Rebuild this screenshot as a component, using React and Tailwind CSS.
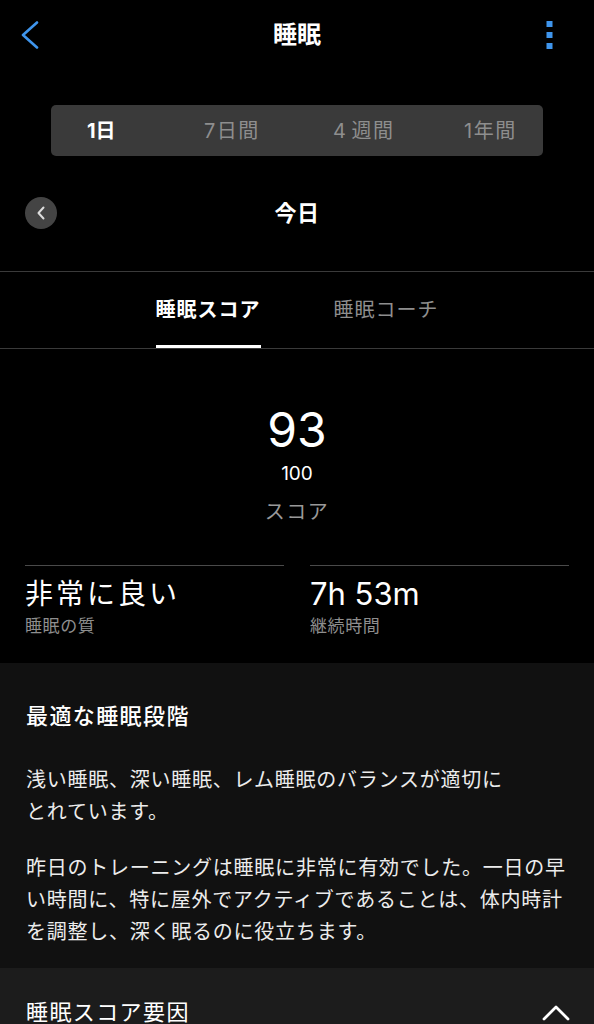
import React from "react";

function BackChevron() {
  return (
    <svg width="18" height="28" viewBox="0 0 18 28" fill="none">
      <path d="M16 1.5 L2 14 L16 26.5" stroke="#3f95ec" strokeWidth="2.6" strokeLinecap="round" strokeLinejoin="round" />
    </svg>
  );
}

function Kebab() {
  return (
    <svg width="7" height="28" viewBox="0 0 7 28">
      <rect x="0.5" y="0" width="6" height="6" fill="#3f95ec" />
      <rect x="0.5" y="11" width="6" height="6" fill="#3f95ec" />
      <rect x="0.5" y="22" width="6" height="6" fill="#3f95ec" />
    </svg>
  );
}

export default function App() {
  return (
    <div className="w-[594px] min-h-screen bg-black text-white [font-family:Inter,'Noto_Sans_CJK_JP',sans-serif] overflow-hidden">
      {/* Header */}
      <div className="h-[70px] flex items-center">
        <div className="w-[90px] pl-[21px] flex items-center">
          <BackChevron />
        </div>
        <div className="flex-1 text-center text-[24px] font-bold leading-[30px]">睡眠</div>
        <div className="w-[90px] pr-[41px] flex justify-end items-center">
          <Kebab />
        </div>
      </div>

      {/* Segmented control */}
      <div className="mt-[35px] mx-[51px] h-[51px] rounded-[5px] bg-[#3a3a3a] flex items-center pl-[36px] text-[20px] leading-[26px]">
        <span className="w-[117px] font-bold text-white">1日</span>
        <span className="w-[129px] text-[#8e8e8e] tracking-[1.5px]">7日間</span>
        <span className="w-[131px] text-[#8e8e8e] tracking-[1.5px]">
          <span className="mr-[4px]">4</span>週間
        </span>
        <span className="text-[#8e8e8e] tracking-[1.5px]">1年間</span>
      </div>

      {/* Date row */}
      <div className="mt-[41px] h-[32px] px-[25px] grid grid-cols-[1fr_auto_1fr] items-center">
        <div className="w-[32px] h-[32px] rounded-full bg-[#444444] flex items-center justify-center">
          <svg width="10" height="14" viewBox="0 0 10 14" fill="none">
            <path d="M7.5 1.5 L2.5 7 L7.5 12.5" stroke="#dddddd" strokeWidth="2" strokeLinecap="round" strokeLinejoin="round" />
          </svg>
        </div>
        <div className="text-[22px] font-bold leading-[30px] tracking-[0.5px]">今日</div>
        <div />
      </div>

      {/* Divider */}
      <div className="mt-[42px] h-px bg-[#3a3a3a]" />

      {/* Tabs */}
      <div className="h-[76px] flex justify-center gap-[73px]">
        <div className="relative h-full flex items-center text-[20px] font-bold tracking-[1px] leading-[28px]">
          睡眠スコア
          <div className="absolute left-0 right-0 bottom-0 h-[3px] bg-white" />
        </div>
        <div className="h-full flex items-center text-[20px] tracking-[1px] leading-[28px] text-[#8e8e8e]">
          睡眠コーチ
        </div>
      </div>
      <div className="h-px bg-[#3a3a3a]" />

      {/* Score */}
      <div className="flex flex-col items-center">
        <div className="mt-[57px] text-[48px] leading-[48px]">93</div>
        <div className="mt-[10px] text-[19px] leading-[20px]">100</div>
        <div className="mt-[16px] text-[20px] leading-[24px] tracking-[1.5px] text-[#999999]">スコア</div>
      </div>

      {/* Stats */}
      <div className="mt-[41px] mb-[26px] px-[25px] grid grid-cols-2 gap-[26px]">
        <div className="border-t border-[#4a4a4a] pt-[10px]">
          <div className="text-[28px] leading-[36px] tracking-[3px]">非常に良い</div>
          <div className="mt-[3px] text-[17px] leading-[22px] tracking-[0.6px] text-[#8e8e8e]">睡眠の質</div>
        </div>
        <div className="border-t border-[#4a4a4a] pt-[10px]">
          <div className="text-[31px] leading-[36px]">7h 53m</div>
          <div className="mt-[3px] text-[17px] leading-[22px] tracking-[0.6px] text-[#8e8e8e]">継続時間</div>
        </div>
      </div>

      {/* Insight section */}
      <div className="bg-[#111111] px-[26px] pt-[38px] pb-[20px]">
        <div className="text-[22px] font-medium leading-[30px] tracking-[1.4px]">最適な睡眠段階</div>
        <p className="mt-[33px] text-[20px] leading-[32px] tracking-[0.76px] text-[#ececec]">
          浅い睡眠、深い睡眠、レム睡眠のバランスが適切に
          <br />
          とれています。
        </p>
        <p className="mt-[24px] text-[20px] leading-[32px] tracking-[0.76px] text-[#ececec] whitespace-nowrap">
          昨日のトレーニングは睡眠に非常に有効でした。一日の早
          <br />
          い時間に、特に屋外でアクティブであることは、体内時計
          <br />
          を調整し、深く眠るのに役立ちます。
        </p>
      </div>

      {/* Factors section */}
      <div className="bg-[#1c1c1c] pl-[26px] pr-[24px] pt-[29px] pb-[20px] flex items-center justify-between">
        <div className="text-[22px] leading-[30px] tracking-[1.4px]">睡眠スコア要因</div>
        <svg width="28" height="17" viewBox="0 0 28 17" fill="none">
          <path d="M2 15 L14 3 L26 15" stroke="#ffffff" strokeWidth="2.8" strokeLinecap="round" strokeLinejoin="round" />
        </svg>
      </div>
    </div>
  );
}
